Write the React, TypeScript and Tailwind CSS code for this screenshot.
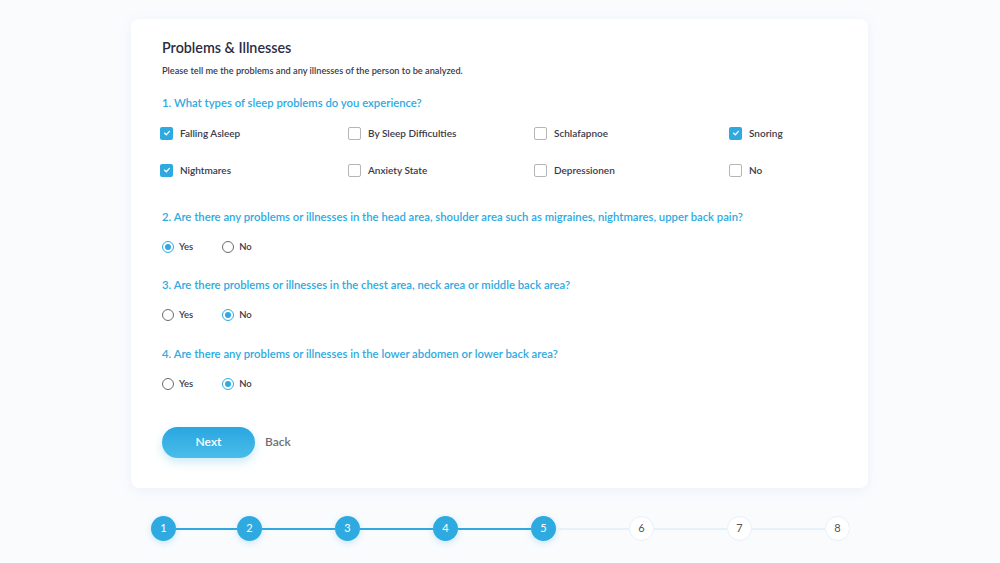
import React from "react";

const font = { fontFamily: '"Lato", "Liberation Sans", sans-serif' };

const sleepOptions = [
  { label: "Falling Asleep", checked: true },
  { label: "By Sleep Difficulties", checked: false },
  { label: "Schlafapnoe", checked: false },
  { label: "Snoring", checked: true },
  { label: "Nightmares", checked: true },
  { label: "Anxiety State", checked: false },
  { label: "Depressionen", checked: false },
  { label: "No", checked: false },
];

const questions = [
  { q: "2. Are there any problems or illnesses in the head area, shoulder area such as migraines, nightmares, upper back pain?", yes: true },
  { q: "3. Are there problems or illnesses in the chest area, neck area or middle back area?", yes: false },
  { q: "4. Are there any problems or illnesses in the lower abdomen or lower back area?", yes: false },
];

const Checkbox = ({ label, checked }: { label: string; checked: boolean }) => (
  <div className="flex items-center gap-[7px] h-[14px]">
    {checked ? (
      <span className="w-[13px] h-[13px] rounded-[2px] bg-[#2eaae1] flex items-center justify-center">
        <svg width="8" height="8" viewBox="0 0 10 10" fill="none">
          <path d="M2 5.2 L4.2 7.2 L8 3" stroke="white" strokeWidth="1.6" strokeLinecap="round" strokeLinejoin="round" />
        </svg>
      </span>
    ) : (
      <span className="w-[13px] h-[13px] rounded-[2px] border border-[#b5b5b5] bg-white" />
    )}
    <span className="text-[10px] font-semibold text-[#3a3a4a]">{label}</span>
  </div>
);

const Radio = ({ label, checked }: { label: string; checked: boolean }) => (
  <div className="flex items-center gap-[5px]">
    {checked ? (
      <span className="w-[12px] h-[12px] rounded-full border-[1.5px] border-[#2eaae1] flex items-center justify-center">
        <span className="w-[6px] h-[6px] rounded-full bg-[#2eaae1]" />
      </span>
    ) : (
      <span className="w-[12px] h-[12px] rounded-full border border-[#6b6b6b]" />
    )}
    <span className="text-[9.5px] font-semibold text-[#3a3a4a]">{label}</span>
  </div>
);

const steps = [1, 2, 3, 4, 5, 6, 7, 8];

export default function App() {
  return (
    <div className="w-[1000px] h-[563px] bg-[#fafbfd] overflow-hidden" style={font}>
      <div className="pt-[19px] pl-[131px]">
        <div className="w-[737px] h-[469px] bg-white rounded-[8px] shadow-[0_2px_12px_rgba(150,180,220,0.15)] pl-[31px] pt-[21px]">
          <h1 className="text-[14.3px] font-semibold text-[#2c2c44] leading-[16px]">Problems &amp; Illnesses</h1>
          <p className="mt-[10px] text-[9.2px] font-semibold text-[#3a3a4a] leading-[10px]">
            Please tell me the problems and any illnesses of the person to be analyzed.
          </p>
          <p className="mt-[21px] text-[11.3px] font-semibold text-[#2eaae1] leading-[12px]">
            1. What types of sleep problems do you experience?
          </p>
          <div className="mt-[17px] ml-[-2px] grid grid-cols-[188px_186px_195px_120px] gap-y-[23px]">
            {sleepOptions.map((o) => (
              <Checkbox key={o.label} label={o.label} checked={o.checked} />
            ))}
          </div>
          <div className="mt-[34px] flex flex-col gap-[25px]">
            {questions.map((item) => (
              <div key={item.q} className="flex flex-col">
                <p className="text-[11.3px] font-semibold text-[#2eaae1] leading-[12px]">{item.q}</p>
                <div className="mt-[17px] flex gap-[29px]">
                  <Radio label="Yes" checked={item.yes} />
                  <Radio label="No" checked={!item.yes} />
                </div>
              </div>
            ))}
          </div>
          <div className="mt-[36px] flex items-center gap-[10px]">
            <button className="w-[93px] h-[31px] rounded-full bg-gradient-to-b from-[#29a6e0] to-[#49bdea] text-white text-[12px] font-semibold shadow-[0_4px_10px_rgba(46,170,225,0.25)]">
              Next
            </button>
            <span className="text-[12px] font-semibold text-[#6e6e78]">Back</span>
          </div>
        </div>
      </div>
      <div className="mt-[28px] pl-[151px] flex items-center">
        {steps.map((s, i) => {
          const done = s <= 5;
          return (
            <React.Fragment key={s}>
              {i > 0 && (
                <span
                  className={
                    (i === 1 ? "w-[61px] " : "w-[73px] ") +
                    (s <= 5 ? "h-[2px] bg-[#2eaae1]" : "h-[2px] bg-[#e6f2fb]")
                  }
                />
              )}
              <span
                className={
                  done
                    ? "w-[25px] h-[25px] rounded-full bg-[#2eaae1] text-white text-[11px] flex items-center justify-center shadow-[0_2px_6px_rgba(46,170,225,0.25)]"
                    : "w-[25px] h-[25px] rounded-full bg-white border border-[#e6f2fb] text-[#555] text-[11px] flex items-center justify-center"
                }
              >
                {s}
              </span>
            </React.Fragment>
          );
        })}
      </div>
    </div>
  );
}
